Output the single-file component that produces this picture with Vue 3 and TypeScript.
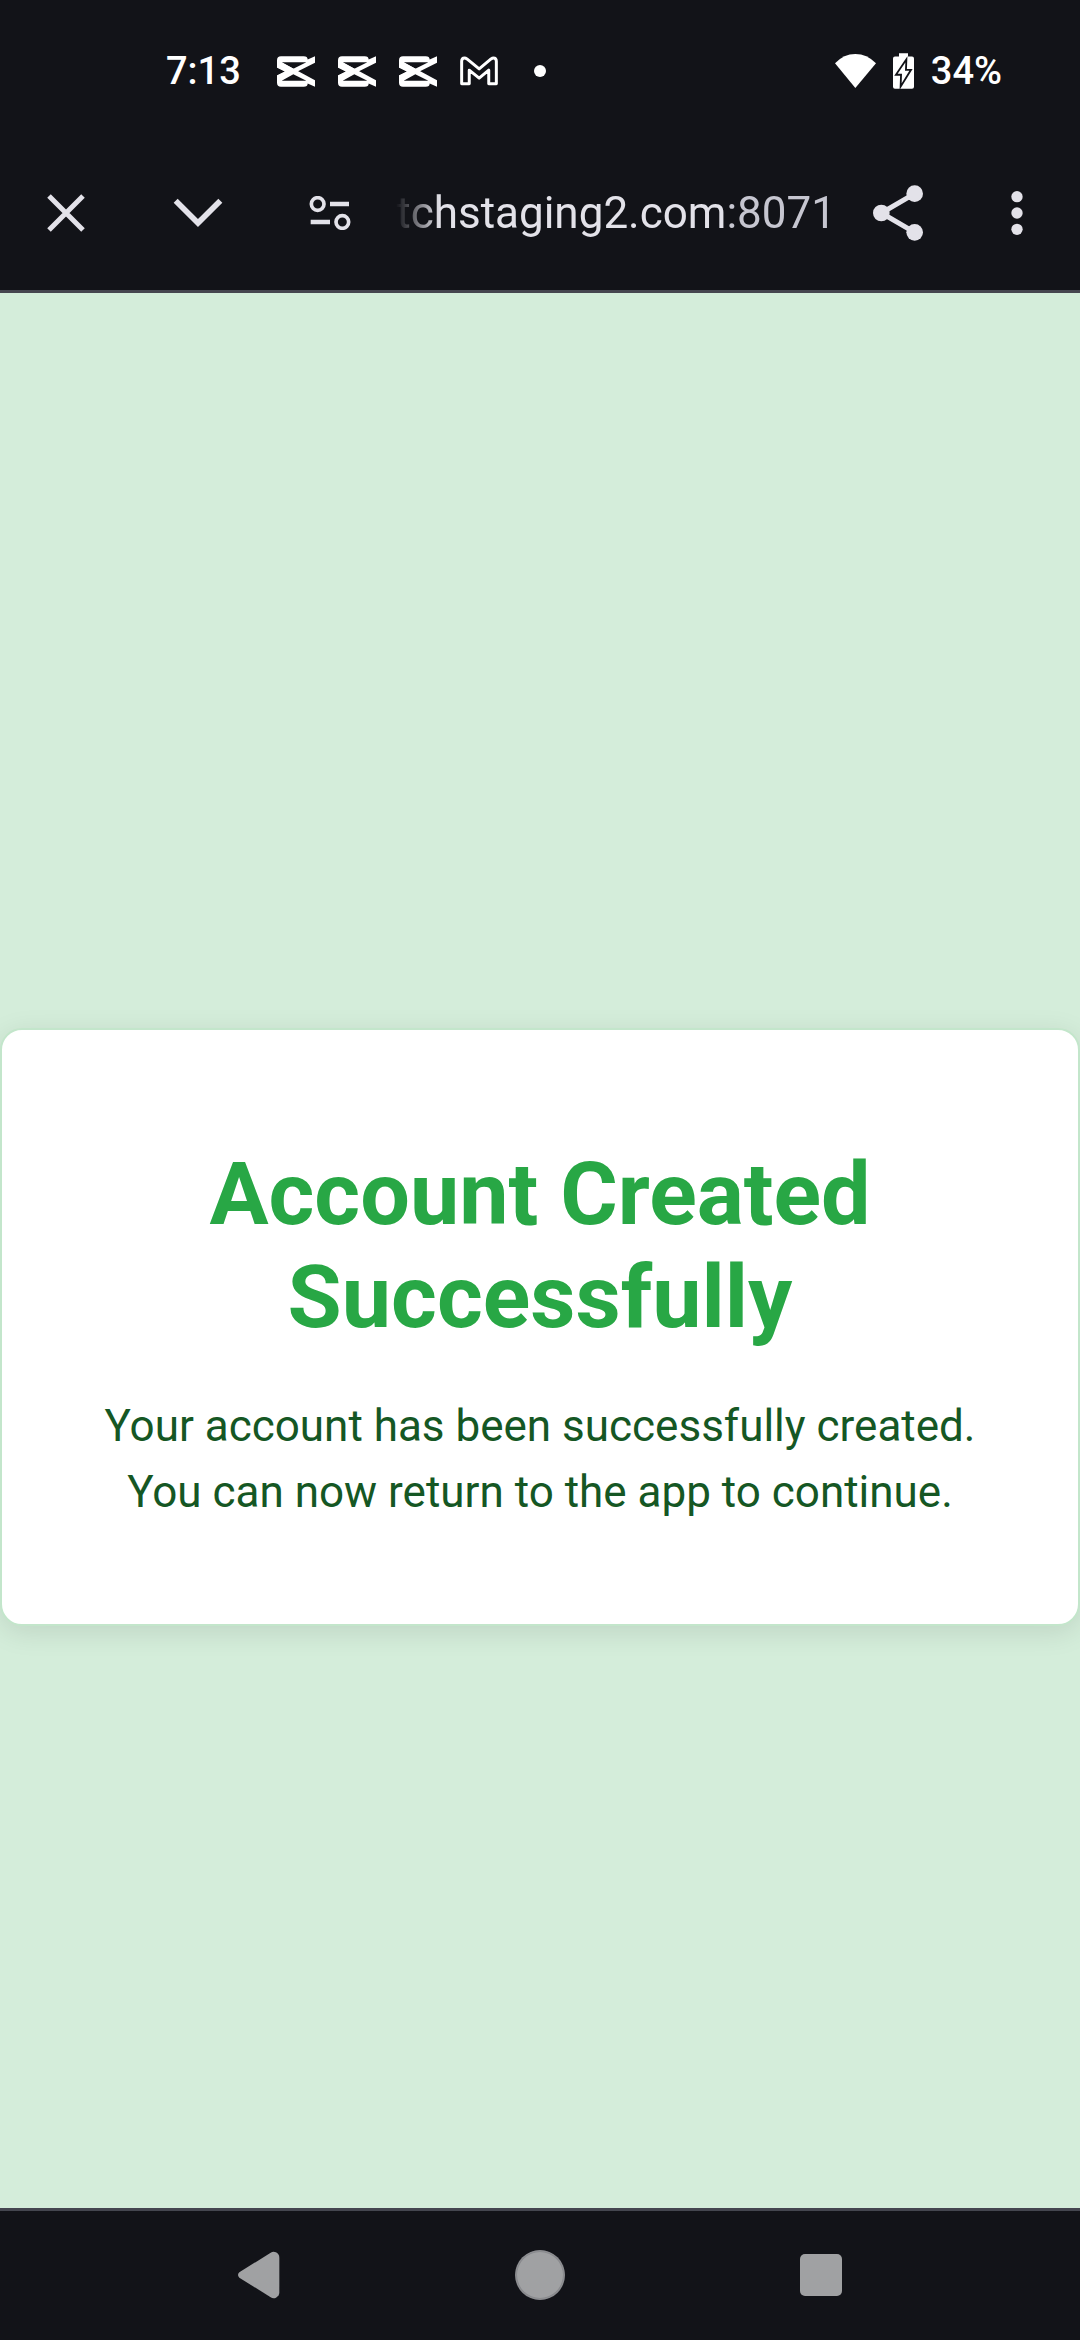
<script setup lang="ts">
interface Address {
  host: string
  port: string
}

const time: string = '7:13'
const battery: string = '34%'
const editorAlerts: number[] = [1, 2, 3]
const address: Address = { host: 'tchstaging2.com', port: ':8071' }
</script>

<template>
  <div class="screen">
    <header class="top">
      <div class="status">
        <span class="status-text time">{{ time }}</span>
        <div class="alerts">
          <svg v-for="n in editorAlerts" :key="n" width="38" height="31" viewBox="0 0 114 92" fill="#fff" aria-hidden="true">
            <path d="M0 34V12Q0 0 12 0H80Q92 0 92 10L114 0V20L0 77V58L24 46ZM14 18L49 38L88 18Z" fill-rule="evenodd" />
            <path d="M0 58V80Q0 92 12 92H80Q92 92 92 82L114 92V72L14 18L0 15V34L24 46ZM14 74L49 54L88 74Z" fill-rule="evenodd" />
          </svg>
          <svg width="38" height="30" viewBox="0 0 115 89" fill="none" stroke="#fff" stroke-width="9" stroke-linejoin="round" aria-hidden="true">
            <path d="M5 15V83H28V42L58 66L87 42V83H110V15Q110 5 101 5Q98 5 94 8L58 38L21 8Q17 5 14 5Q5 5 5 15Z" />
          </svg>
          <svg width="38" height="12" viewBox="0 0 38 12" aria-hidden="true"><circle cx="19" cy="6" r="6" fill="#fff" /></svg>
        </div>
        <div class="system">
          <svg width="41" height="34" viewBox="0 0 123 102" fill="#fff" aria-hidden="true">
            <path d="M0 28Q26 0 61 0T123 28L61 102Z" />
          </svg>
          <svg width="21" height="36" viewBox="0 0 63 107" aria-hidden="true">
            <path d="M18 0H45V10H57Q63 10 63 16V101Q63 107 57 107H6Q0 107 0 101V16Q0 10 6 10H18Z" fill="#fff" />
            <path d="M37 28L14 62H27L26 90L49 53H36Z" fill="#fff" stroke="#121318" stroke-width="11" paint-order="stroke" />
          </svg>
          <span class="status-text">{{ battery }}</span>
        </div>
      </div>
      <div class="toolbar">
        <button type="button" aria-label="Close tab">
          <svg width="38" height="38" viewBox="0 0 114 114" fill="none" stroke="#e3e2e9" stroke-width="15">
            <path d="M6 6L108 108M108 6L6 108" />
          </svg>
        </button>
        <button type="button" aria-label="Minimize">
          <svg width="50" height="30" viewBox="0 0 150 90" fill="none" stroke="#e3e2e9" stroke-width="17">
            <path d="M8 8L75 75L142 8" />
          </svg>
        </button>
        <button type="button" aria-label="Site information">
          <svg width="42" height="34" viewBox="0 0 126 102" fill="none" stroke="#e3e2e9" stroke-width="11">
            <circle cx="26" cy="24" r="19" />
            <circle cx="100" cy="78" r="19" />
            <path d="M63 24H120M5 78H63" stroke-width="13" />
          </svg>
        </button>
        <div class="address">
          <span>{{ address.host }}</span><span class="port">{{ address.port }}</span>
        </div>
        <button type="button" class="share" aria-label="Share">
          <svg width="50" height="56" viewBox="0 0 150 168" fill="#e3e2e9">
            <path d="M125 26L25 84L125 142" fill="none" stroke="#e3e2e9" stroke-width="15" />
            <circle cx="25" cy="84" r="25" />
            <circle cx="125" cy="26" r="25" />
            <circle cx="125" cy="142" r="25" />
          </svg>
        </button>
        <button type="button" class="menu" aria-label="More options">
          <svg width="12" height="44" viewBox="0 0 36 132" fill="#e3e2e9">
            <circle cx="18" cy="17" r="17" />
            <circle cx="18" cy="66" r="17" />
            <circle cx="18" cy="115" r="17" />
          </svg>
        </button>
      </div>
    </header>

    <main class="page">
      <section class="card">
        <h1>Account Created Successfully</h1>
        <p>Your account has been successfully created. You can now return to the app to continue.</p>
      </section>
    </main>

    <nav class="system-nav" aria-label="System navigation">
      <button type="button" aria-label="Back">
        <svg width="42" height="48" viewBox="0 0 126 144" fill="#a0a1a3">
          <path d="M4 64L98 5Q106 0 114 4Q124 9 124 20V124Q124 135 114 140Q106 144 98 139L4 80Q-4 72 4 64Z" />
        </svg>
      </button>
      <button type="button" aria-label="Home">
        <svg width="50" height="50" viewBox="0 0 50 50">
          <circle cx="25" cy="25" r="25" fill="#85868a" />
          <circle cx="25" cy="25" r="23" fill="#a0a1a3" />
          <circle cx="25" cy="25" r="24" fill="none" stroke="#8f9093" />
        </svg>
      </button>
      <button type="button" aria-label="Recent apps">
        <svg width="42" height="42" viewBox="0 0 42 42"><rect width="42" height="42" rx="5" fill="#a0a1a3" /></svg>
      </button>
    </nav>
  </div>
</template>

<style>
body {
  margin: 0;
  background: #d4edda;
}
</style>

<style scoped>
.screen {
  display: flex;
  flex-direction: column;
  min-height: 100vh;
  font-family: Roboto, "Noto Sans", sans-serif;
}

svg {
  display: block;
  flex: none;
}

button {
  display: flex;
  align-items: center;
  justify-content: center;
  width: 132px;
  flex: none;
  padding: 0;
  border: 0;
  background: none;
}

.top {
  background: #121318;
  border-bottom: 3px solid #46464f;
}

.status {
  display: flex;
  align-items: center;
  height: 130px;
  padding: 6px 78px 0 166px;
  color: #fff;
}

.status-text {
  font-size: 38px;
  font-weight: 500;
  line-height: 48px;
}

.time {
  width: 111px;
}

.alerts {
  display: flex;
  align-items: center;
  gap: 23px;
}

.system {
  display: flex;
  align-items: center;
  gap: 17px;
  margin-left: auto;
}

.toolbar {
  display: flex;
  align-items: stretch;
  height: 154px;
  padding-right: 6px;
}

.toolbar .share {
  width: 124px;
}

.toolbar .menu {
  width: 114px;
}

.address {
  display: flex;
  flex: 1;
  align-items: center;
  justify-content: flex-end;
  min-width: 0;
  overflow: hidden;
  color: #e3e2e9;
  font-size: 44px;
  line-height: 60px;
  white-space: nowrap;
  mask-image: linear-gradient(to right, transparent, #000 44px);
}

.port {
  color: #c6c6d0;
}

.page {
  display: flex;
  flex: 1;
  align-items: center;
  justify-content: center;
  padding-top: 153px;
  background: #d4edda;
}

.card {
  box-sizing: border-box;
  width: 100%;
  padding: 112px 82px 99px;
  border: 2px solid #c3e6cb;
  border-radius: 22px;
  background: #fff;
  box-shadow: 0 6px 28px rgba(0, 0, 0, 0.1);
  text-align: center;
}

h1 {
  margin: 0 0 45px;
  color: #28a745;
  font-size: 88px;
  font-weight: 700;
  line-height: 103px;
}

p {
  margin: 0;
  color: #155724;
  font-size: 44px;
  line-height: 66px;
}

.system-nav {
  display: flex;
  justify-content: center;
  gap: 149px;
  height: 127px;
  padding-bottom: 2px;
  border-top: 3px solid #44464f;
  background: #121318;
}
</style>
